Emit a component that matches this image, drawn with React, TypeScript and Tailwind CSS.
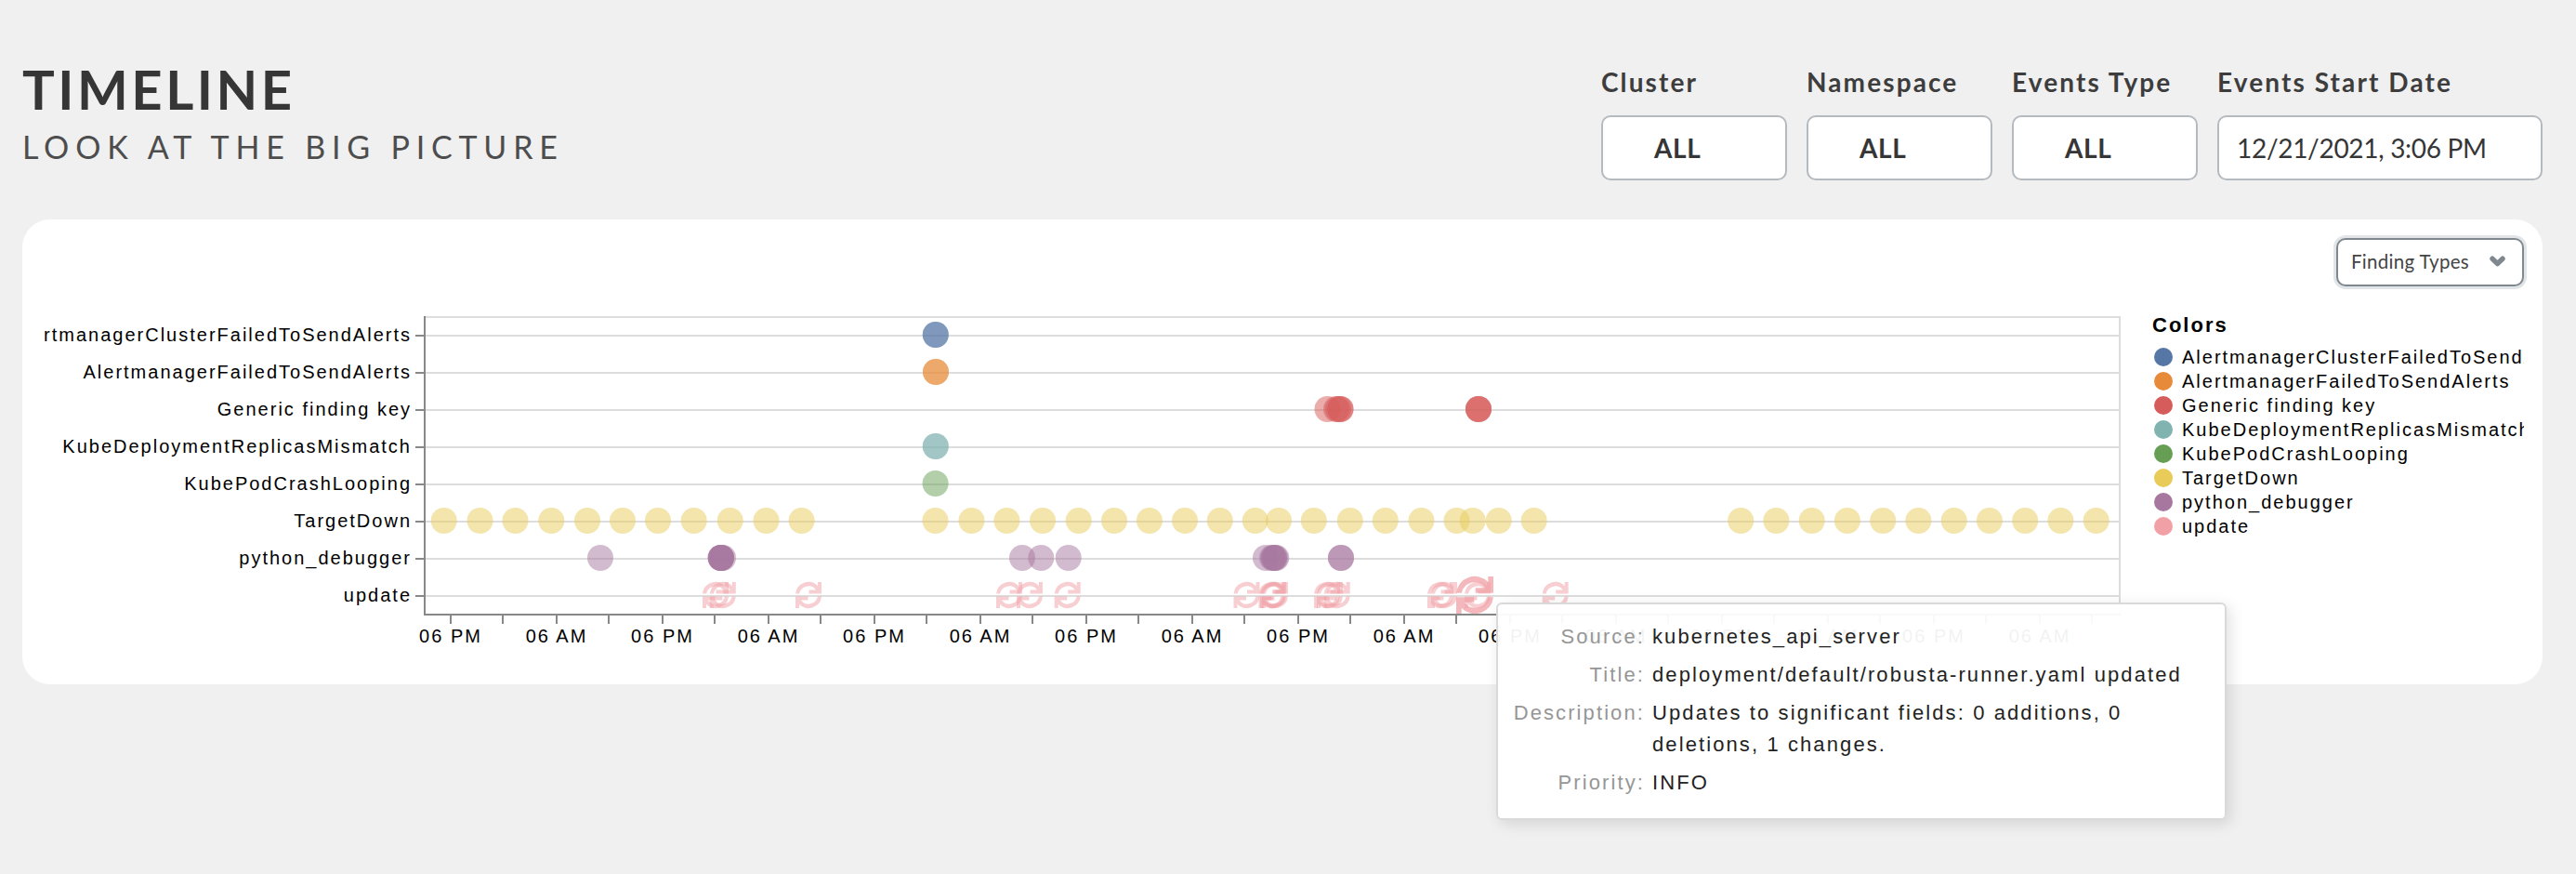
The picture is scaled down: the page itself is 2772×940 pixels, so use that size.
import React from "react";

const series = [
  { name: "AlertmanagerClusterFailedToSendAlerts", color: "#5676a5" },
  { name: "AlertmanagerFailedToSendAlerts", color: "#e78b3a" },
  { name: "Generic finding key", color: "#d55c5a" },
  { name: "KubeDeploymentReplicasMismatch", color: "#81b4b1" },
  { name: "KubePodCrashLooping", color: "#669f54" },
  { name: "TargetDown", color: "#e8cb59" },
  { name: "python_debugger", color: "#a8779f" },
  { name: "update", color: "#f1a0a6" },
];

// One list of x positions for each row that is drawn with circles.
const points: number[][] = [
  [1006.8, 1006.8],
  [1007, 1007],
  [1428.5, 1438, 1440, 1442.5, 1442.5, 1591, 1591, 1591],
  [1006.8, 1006.8],
  [1006.6],
  [
    477.7, 516.5, 554.5, 593.3, 632, 670, 708, 746.7, 785.7, 824.5, 862.6, 1006.5, 1045.5, 1083.4, 1122,
    1160.7, 1199, 1236.9, 1275, 1312.8, 1350.8, 1376, 1413.8, 1452.8, 1490.8, 1529.5, 1567.5, 1584.7,
    1612.7, 1650.7, 1873.2, 1911.4, 1949.7, 1987.9, 2026.2, 2064.4, 2102.7, 2140.9, 2179.2, 2217.4, 2255.7,
  ],
  [646, 775.3, 775.7, 776, 776, 776, 778, 1100, 1120.3, 1149.7, 1362, 1369, 1370.5, 1371, 1372, 1373.3, 1443, 1443],
];

const updates = [
  770, 777.8, 870, 1086, 1108, 1148.7, 1341.5, 1368.5, 1370, 1372, 1428, 1431, 1438.7, 1550, 1554, 1590,
  1673.7,
];

const hours = Array.from({ length: 16 }, (_, i) => i);

function UpdateMark({ x, scale = 1, opacity = 0.5 }: { x: number; scale?: number; opacity?: number }) {
  const half = "M-14 -1.5A14 14 0 0 1 10 -9.8V-14H14V-1.5H0.5V-5.5H8A10 10 0 0 0 -9.9 -1.5Z";
  return (
    <g transform={`translate(${x} 640) scale(${scale})`} fill="#f1a0a6" opacity={opacity}>
      <path d={half} />
      <path d={half} transform="rotate(180)" />
    </g>
  );
}

function Chart() {
  return (
    <svg
      width="2246"
      height="380"
      viewBox="47 330 2246 380"
      className="shrink-0 font-['Liberation_Sans',Arial,sans-serif] text-[20px] tracking-[2px]"
    >
      <g stroke="#dddddd" strokeWidth="2" fill="none">
        <rect x="457" y="341" width="1824" height="320" />
        {series.map((s, i) => (
          <path key={s.name} d={`M457 ${361 + i * 40}H2281`} />
        ))}
      </g>
      <g stroke="#888888" strokeWidth="2" fill="none">
        <path d="M457 340V662M456 661H2282" />
        {series.map((s, i) => (
          <path key={s.name} d={`M447 ${361 + i * 40}H457`} />
        ))}
        {hours.map((h) => (
          <path key={h} d={`M${485 + h * 114} 661V671M${541 + h * 114} 661V671`} />
        ))}
      </g>
      {series.map((s, i) => (
        <text key={s.name} x="443" y={367 + i * 40} textAnchor="end" fill="#000">
          {s.name}
        </text>
      ))}
      {hours.map((h) => (
        <text key={h} x={485 + h * 114} y="691" textAnchor="middle" fill="#000">
          {h % 2 ? "06 AM" : "06 PM"}
        </text>
      ))}
      {points.map((row, i) =>
        row.map((x, k) => (
          <circle key={`${i}-${k}`} cx={x} cy={360 + i * 40} r="14" fill={series[i].color} opacity="0.5" />
        )),
      )}
      {updates.map((x) => (
        <UpdateMark key={x} x={x} />
      ))}
      <UpdateMark x={1587} scale={1.43} opacity={0.75} />
    </svg>
  );
}

function Filter({ label, value, wide }: { label: string; value: string; wide?: boolean }) {
  return (
    <div className={wide ? "w-[350px]" : "w-[200px]"}>
      <div className="h-[56px] whitespace-nowrap text-[28px] leading-[40px] font-bold tracking-[2.1px] text-[#3d3d3d]">
        {label}
      </div>
      <div
        className={
          "flex h-[70px] items-center rounded-[10px] border-2 border-[#b5babf] bg-white text-[28px] whitespace-nowrap text-[#363636] " +
          (wide ? "pl-[19px] tracking-[-0.3px]" : "pl-[55px] font-bold tracking-[0.6px]")
        }
      >
        {value}
      </div>
    </div>
  );
}

const details = [
  ["Source:", "kubernetes_api_server"],
  ["Title:", "deployment/default/robusta-runner.yaml updated"],
  ["Description:", "Updates to significant fields: 0 additions, 0 deletions, 1 changes."],
  ["Priority:", "INFO"],
];

function Tooltip() {
  return (
    <div className="absolute top-[648px] left-[1610px] grid h-[234px] w-[786px] grid-cols-[146px_590px] content-start gap-x-[8px] gap-y-[7px] rounded-[6px] border-2 border-[#d9d9d9] bg-white/95 pt-[18px] pl-[12px] font-['Liberation_Sans',Arial,sans-serif] text-[22px] leading-[34px] tracking-[2.1px] shadow-[4px_4px_16px_rgba(0,0,0,0.12)]">
      {details.map(([k, v]) => (
        <React.Fragment key={k}>
          <span className="text-right text-[#969696]">{k}</span>
          <span className="text-[#222]">{v}</span>
        </React.Fragment>
      ))}
    </div>
  );
}

export default function App() {
  return (
    <div className="relative h-[940px] w-[2772px] overflow-hidden bg-[#f0f0f0] px-6 pt-[68px] font-[Lato,sans-serif]">
      <header className="flex h-[168px] justify-between pr-3">
        <div className="whitespace-nowrap">
          <h1 className="text-[58px] leading-[56px] font-bold tracking-[3.5px] text-[#363636]">TIMELINE</h1>
          <p className="mt-[13px] text-[34px] leading-[42px] tracking-[6.8px] text-[#4d4d4d]">LOOK AT THE BIG PICTURE</p>
        </div>
        <div className="flex gap-[21px]">
          <Filter label="Cluster" value="ALL" />
          <Filter label="Namespace" value="ALL" />
          <Filter label="Events Type" value="ALL" />
          <Filter label="Events Start Date" value="12/21/2021, 3:06 PM" wide />
        </div>
      </header>

      <main className="h-[500px] w-[2712px] rounded-[30px] bg-white pt-5">
        <div className="flex h-[74px] justify-end pr-5">
          <button className="flex h-[52px] w-[202px] items-center justify-between rounded-[10px] border-2 border-[#80888f] bg-white pr-[18px] pb-[2px] pl-[14px] text-[20.5px] tracking-[0.3px] whitespace-nowrap text-[#444] shadow-[0_0_0_3px_#e2e5e7]">
            Finding Types
            <svg width="17" height="13" viewBox="0 0 17 13" className="shrink-0">
              <path
                d="M3 3.2L8.5 8.6L14 3.2"
                fill="none"
                stroke="#80888f"
                strokeWidth="5.4"
                strokeLinecap="round"
                strokeLinejoin="round"
              />
            </svg>
          </button>
        </div>
        <div className="flex pl-[23px]">
          <Chart />
          <div className="ml-[23px] w-[400px] overflow-hidden pt-[6px] font-['Liberation_Sans',Arial,sans-serif] whitespace-nowrap text-black">
            <div className="h-[35px] text-[22px] leading-[28px] font-bold tracking-[2px]">Colors</div>
            {series.map((s) => (
              <div key={s.name} className="flex h-[26px] items-center gap-[10px] pl-[2px] text-[20px] tracking-[2px]">
                <svg width="20" height="20" className="shrink-0">
                  <circle cx="10" cy="10" r="10" fill={s.color} />
                </svg>
                <span className="leading-[26px]">{s.name}</span>
              </div>
            ))}
          </div>
        </div>
      </main>

      <Tooltip />
    </div>
  );
}
